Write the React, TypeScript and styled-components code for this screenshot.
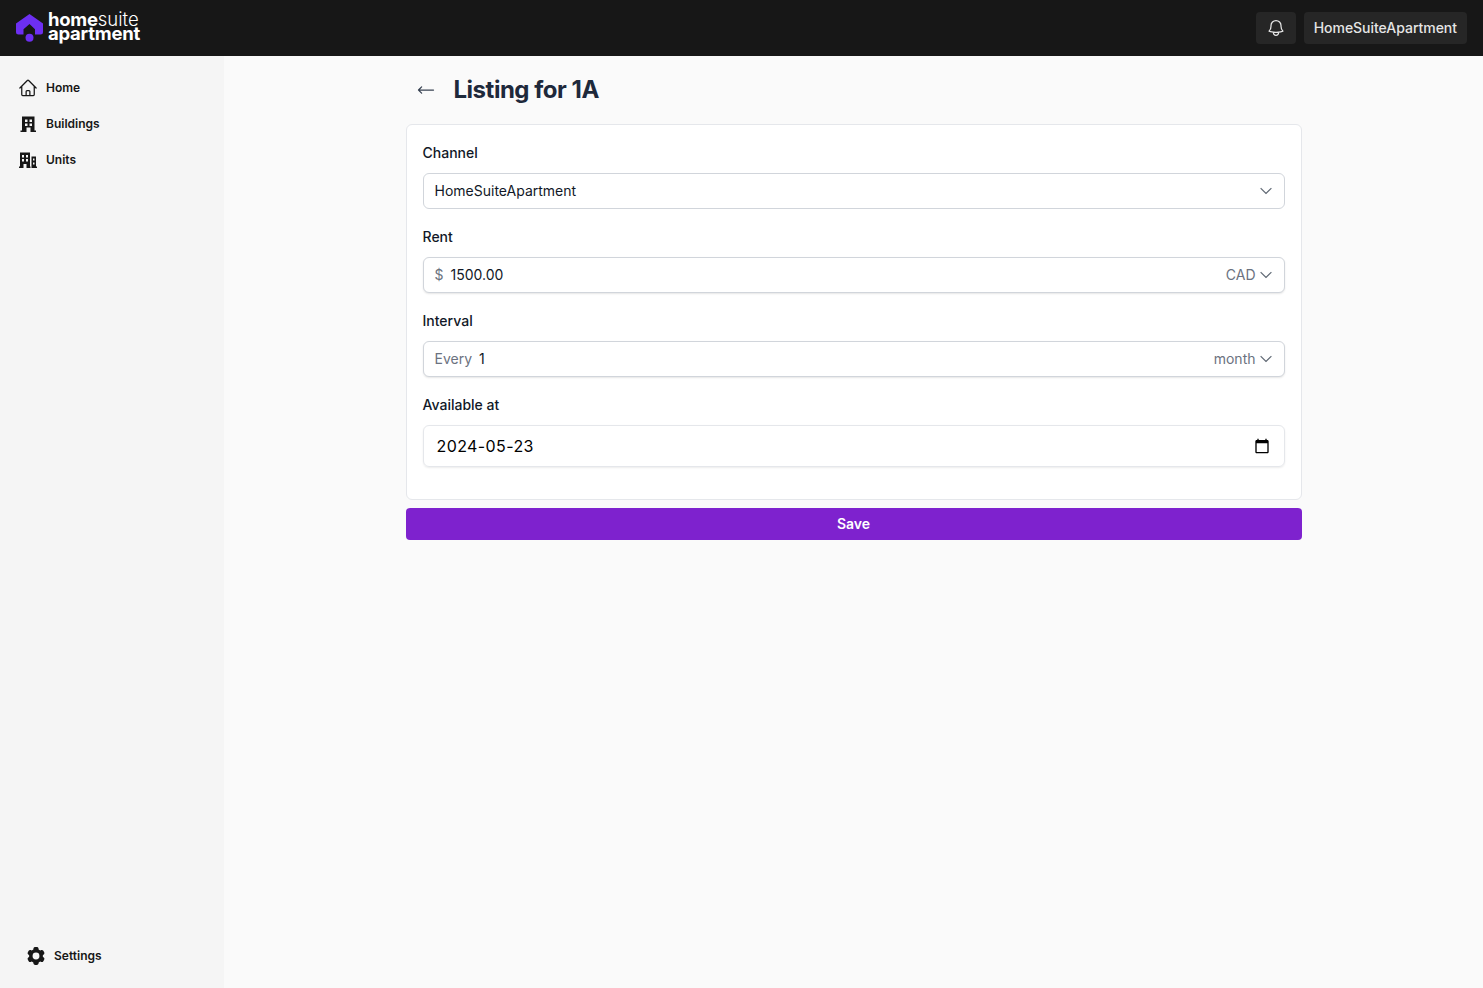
import React from "react";
import styled, { createGlobalStyle } from "styled-components";
import {
  HiOutlineHome,
  HiCog6Tooth,
  HiOutlineBell,
  HiArrowLongLeft,
  HiChevronDown,
} from "react-icons/hi2";

const Global = createGlobalStyle`
  html, body { margin: 0; padding: 0; height: 100%; }
  body { font-family: Inter, "Liberation Sans", sans-serif; background: #fafafa; color: #111827; }
  * { box-sizing: border-box; }
`;

const Page = styled.div`
  display: flex;
  flex-direction: column;
  height: 988px;
  overflow: hidden;
`;

const Header = styled.header`
  height: 56px;
  flex: none;
  background: #171717;
  display: flex;
  align-items: center;
  justify-content: space-between;
  padding: 0 16px;
`;

const Logo = styled.div`
  display: flex;
  align-items: center;
  gap: 4px;
`;

const LogoText = styled.div`
  display: flex;
  flex-direction: column;
  color: #fff;
  font-family: Inter, sans-serif;
  font-size: 18.5px;
  line-height: 14px;
  margin-top: -5px;
`;

const LogoLine = styled.span`
  letter-spacing: -0.25px;
  white-space: nowrap;
`;

const LogoBold = styled.b`
  font-weight: 700;
`;

const LogoLight = styled.span`
  font-weight: 300;
  letter-spacing: 0;
`;

const HeaderActions = styled.div`
  display: flex;
  gap: 8px;
`;

const HeaderButton = styled.button`
  height: 32px;
  min-width: 40px;
  padding: 0 10px;
  border: 0;
  border-radius: 4px;
  background: #262626;
  color: #e5e5e5;
  font: 500 14px/20px Inter, sans-serif;
  letter-spacing: -0.03px;
  display: flex;
  align-items: center;
  justify-content: center;
`;

const Body = styled.div`
  flex: 1;
  display: flex;
  min-height: 0;
`;

const Sidebar = styled.aside`
  width: 224px;
  flex: none;
  background: #f5f5f5;
  display: flex;
  flex-direction: column;
  justify-content: space-between;
  padding: 14px 0 14px 16px;
`;

const NavList = styled.nav`
  display: flex;
  flex-direction: column;
`;

const NavItem = styled.a<{ $indent?: boolean }>`
  height: 36px;
  display: flex;
  align-items: center;
  gap: ${(p) => (p.$indent ? 7 : 8)}px;
  padding-left: ${(p) => (p.$indent ? 9 : 2)}px;
  padding-bottom: 2px;
  font-size: 12px;
  font-weight: 600;
  color: #171717;
  & > svg { margin-top: 2px; }
`;

const Main = styled.main`
  flex: 1;
  display: flex;
  justify-content: center;
`;

const Column = styled.div`
  width: 896px;
  display: flex;
  flex-direction: column;
`;

const TitleRow = styled.div`
  height: 68px;
  display: flex;
  align-items: center;
  gap: 18px;
  padding-left: 10px;
`;

const Title = styled.h1`
  margin: 0;
  font-size: 24px;
  line-height: 32px;
  font-weight: 700;
  letter-spacing: -0.48px;
  color: #1e293b;
`;

const Card = styled.section`
  background: #fff;
  border: 1px solid #e5e7eb;
  border-radius: 6px;
  padding: 18px 16px 32px;
  display: flex;
  flex-direction: column;
  gap: 18px;
`;

const Field = styled.div`
  display: flex;
  flex-direction: column;
  gap: 10px;
`;

const Label = styled.label`
  font-size: 14px;
  line-height: 20px;
  font-weight: 500;
  color: #111827;
`;

const Control = styled.div<{ $shadow?: boolean }>`
  height: 36px;
  display: flex;
  align-items: center;
  padding: 0 10px 2px 11px;
  background: #fff;
  border: 1px solid #d1d5db;
  border-radius: 6px;
  font-size: 14px;
  box-shadow: ${(p) => (p.$shadow ? "0 1px 2px rgba(0,0,0,.1)" : "none")};
`;

const Value = styled.span`
  flex: 1;
  color: #111827;
`;

const Prefix = styled.span`
  color: #6b7280;
  margin-right: 7px;
`;

const Suffix = styled.span`
  display: flex;
  align-items: center;
  gap: 2px;
  color: #6b7280;
`;

const Chevron = styled(HiChevronDown)`
  width: 16px;
  height: 16px;
  color: #4b5563;
  margin-top: 2px;
  stroke-width: 0.3;
`;

const DateControl = styled.div`
  height: 42px;
  display: flex;
  align-items: center;
  justify-content: space-between;
  padding: 0 14px 0 13px;
  border: 1px solid #e5e7eb;
  border-radius: 6px;
  box-shadow: 0 1px 2px rgba(0,0,0,.08);
  font-size: 16px;
  letter-spacing: 0.4px;
  color: #000;
`;

const SaveButton = styled.button`
  margin-top: 8px;
  height: 32px;
  width: 100%;
  border: 0;
  border-radius: 4px;
  background: #7e22ce;
  color: #fff;
  font: 600 14px/20px Inter, sans-serif;
`;

const LogoMark = () => (
  <svg width="28" height="28" viewBox="0 0 28 28" fill="#6d2ff2">
    <path d="M13.5 0 27 9.5V18a2.5 2.5 0 0 1-2.5 2.5H19V15.3L13.5 10 7.5 15.3V20.5H2.5A2.5 2.5 0 0 1 0 18V9.5Z" />
    <circle cx="13.5" cy="23.7" r="4" />
  </svg>
);

const CalendarIcon = () => (
  <svg width="16" height="16" viewBox="0 0 24 24" fill="#000">
    <path d="M20 3h-1V1h-2v2H7V1H5v2H4c-1.1 0-2 .9-2 2v16c0 1.1.9 2 2 2h16c1.1 0 2-.9 2-2V5c0-1.1-.9-2-2-2zm0 18H4V8h16v13z" />
  </svg>
);

const BuildingIcon = () => (
  <svg width="20" height="20" viewBox="2 2 20 20" fill="#171717" fillRule="evenodd">
    <path d="M6 4.5H18.5V18.5H20V20H14.5V15.5H10.5V20H4.5V18.5H6ZM9 7.5h2.5V10H9ZM13.5 7.5H16V10h-2.5ZM9 11.5h2.5V14H9ZM13.5 11.5H16V14h-2.5Z" />
  </svg>
);

const UnitsIcon = () => (
  <svg width="20" height="20" viewBox="2 2 20 20" fill="#171717" fillRule="evenodd">
    <path d="M4 4.5H14V18.5H14.5V20H10.5V16H7.5V20H3V18.5H4ZM6 7h2V9.5H6ZM10 7h2V9.5h-2ZM6 11h2V13.5H6ZM10 11h2V13.5h-2Z" />
    <path d="M15.5 8.5H20V18.5H21V20H15.5ZM17 10.5h1.5v2H17ZM17 14.5h1.5v2H17Z" />
  </svg>
);

export default function App() {
  return (
    <Page>
      <Global />
      <Header>
        <Logo>
          <LogoMark />
          <LogoText>
            <LogoLine>
              <LogoBold>home</LogoBold>
              <LogoLight>suite</LogoLight>
            </LogoLine>
            <LogoLine>
              <LogoBold>apartment</LogoBold>
            </LogoLine>
          </LogoText>
        </Logo>
        <HeaderActions>
          <HeaderButton aria-label="Notifications">
            <HiOutlineBell size={20} />
          </HeaderButton>
          <HeaderButton>HomeSuiteApartment</HeaderButton>
        </HeaderActions>
      </Header>
      <Body>
        <Sidebar>
          <NavList>
            <NavItem>
              <HiOutlineHome size={20} />
              Home
            </NavItem>
            <NavItem>
              <BuildingIcon />
              Buildings
            </NavItem>
            <NavItem>
              <UnitsIcon />
              Units
            </NavItem>
          </NavList>
          <NavList>
            <NavItem $indent>
              <HiCog6Tooth size={22} />
              Settings
            </NavItem>
          </NavList>
        </Sidebar>
        <Main>
          <Column>
            <TitleRow>
              <HiArrowLongLeft size={20} color="#374151" />
              <Title>Listing for 1A</Title>
            </TitleRow>
            <Card>
              <Field>
                <Label>Channel</Label>
                <Control>
                  <Value>HomeSuiteApartment</Value>
                  <Chevron />
                </Control>
              </Field>
              <Field>
                <Label>Rent</Label>
                <Control $shadow>
                  <Prefix>$</Prefix>
                  <Value>1500.00</Value>
                  <Suffix>
                    CAD
                    <Chevron />
                  </Suffix>
                </Control>
              </Field>
              <Field>
                <Label>Interval</Label>
                <Control $shadow>
                  <Prefix>Every</Prefix>
                  <Value>1</Value>
                  <Suffix>
                    month
                    <Chevron />
                  </Suffix>
                </Control>
              </Field>
              <Field>
                <Label>Available at</Label>
                <DateControl>
                  <span>2024-05-23</span>
                  <CalendarIcon />
                </DateControl>
              </Field>
            </Card>
            <SaveButton>Save</SaveButton>
          </Column>
        </Main>
      </Body>
    </Page>
  );
}
